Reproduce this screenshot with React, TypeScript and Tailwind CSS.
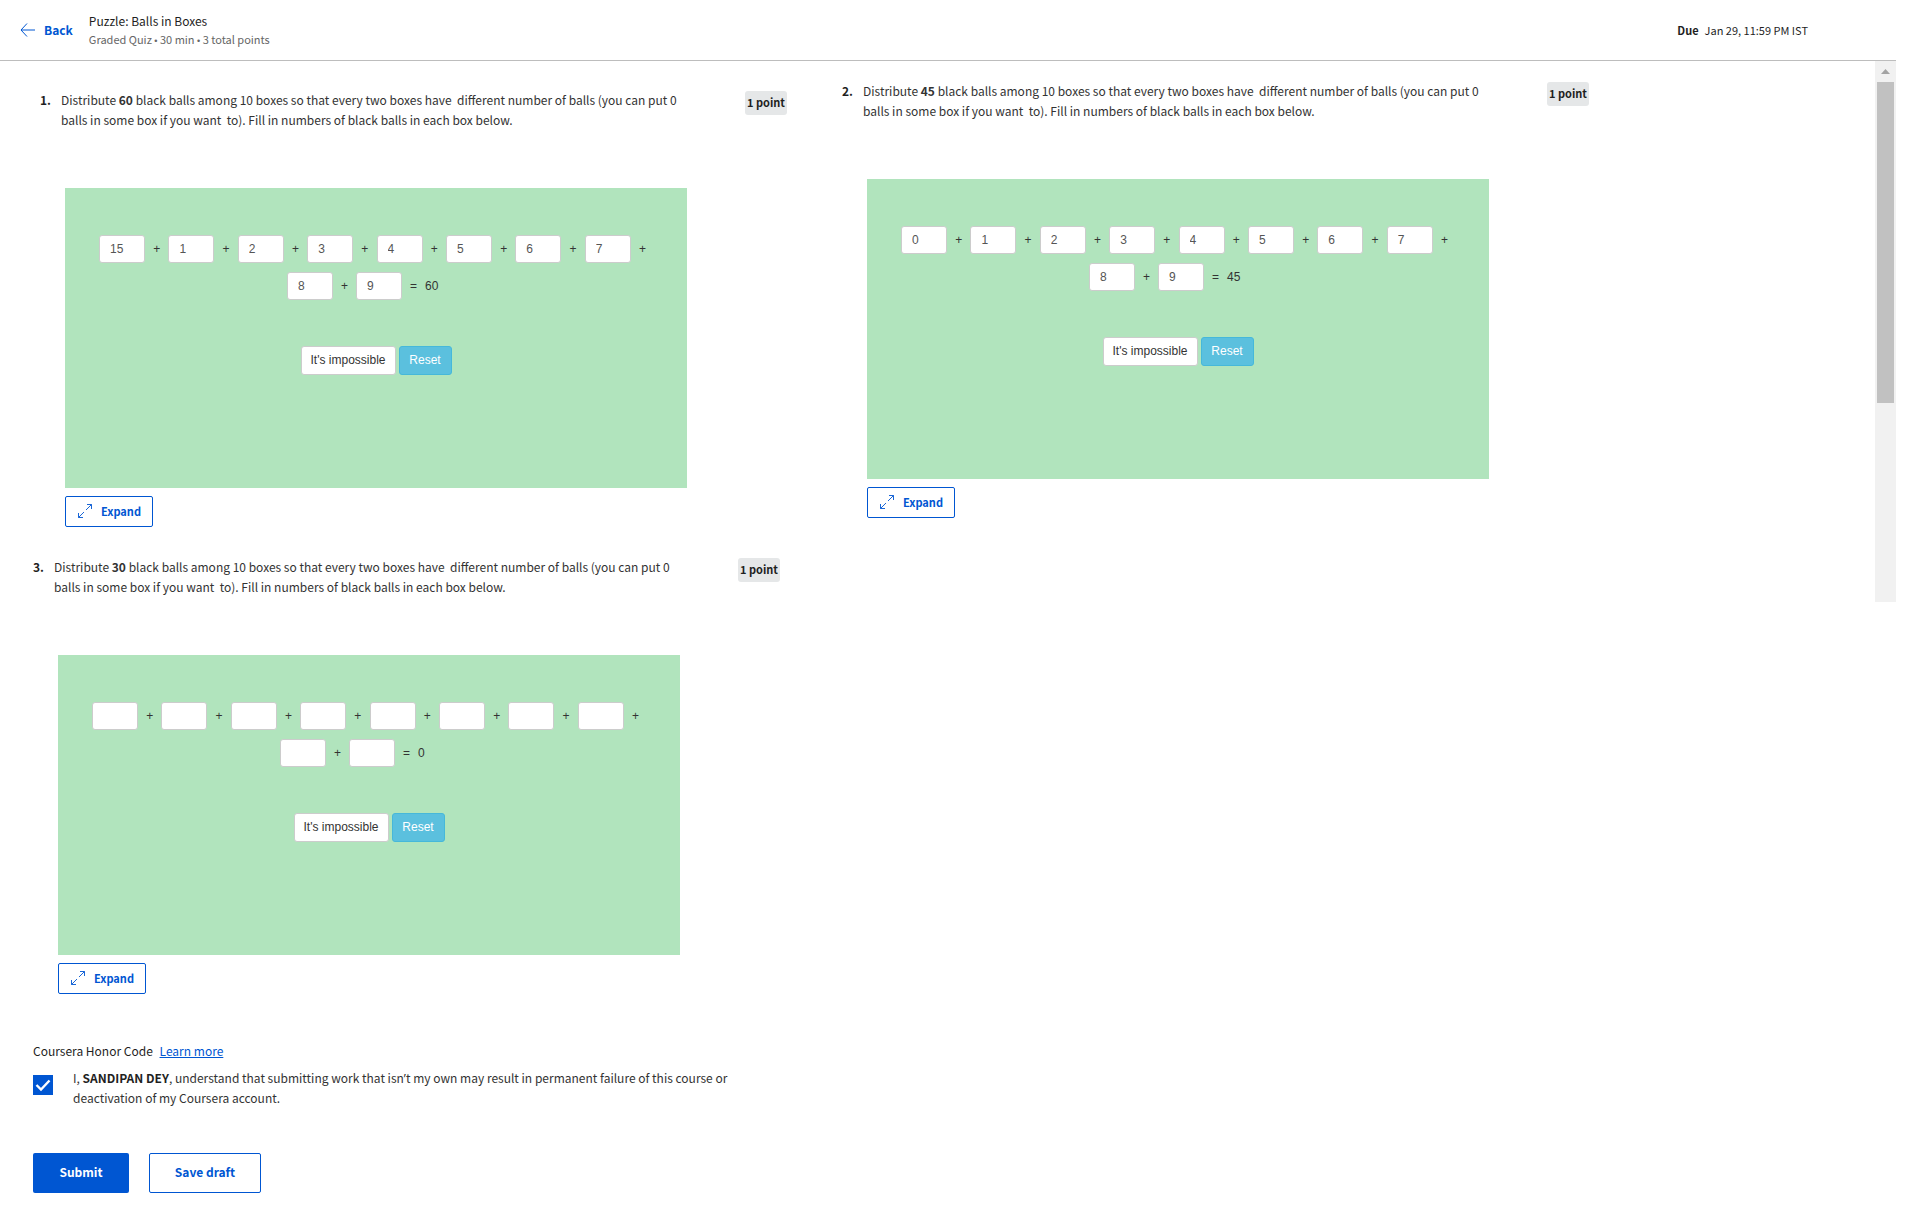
import React from "react";

type Question = {
  id: number;
  total: number;
  values: string[];
  sum: number;
};

const questions: Question[] = [
  { id: 1, total: 60, values: ["15", "1", "2", "3", "4", "5", "6", "7", "8", "9"], sum: 60 },
  { id: 2, total: 45, values: ["0", "1", "2", "3", "4", "5", "6", "7", "8", "9"], sum: 45 },
  { id: 3, total: 30, values: ["", "", "", "", "", "", "", "", "", ""], sum: 0 },
];

function ExpandIcon() {
  return (
    <svg width="16" height="16" viewBox="0 0 16 16" fill="none" stroke="#0056d2" strokeWidth="0.9" aria-hidden="true">
      <path d="M10 1.500h4.500v4.500M14.500 1.500L9 7M7 9L1.500 14.500M1.500 10v4.500h4.500" />
    </svg>
  );
}

function BallInput({ value, label }: { value: string; label: string }) {
  return (
    <input
      type="text"
      aria-label={label}
      defaultValue={value}
      className="h-7 w-[46px] shrink-0 rounded-[3px] border border-[#ccc] bg-white px-2.5 text-xs text-[#555] outline-none"
    />
  );
}

function Terms({ values, start }: { values: string[]; start: number }) {
  return (
    <>
      {values.map((value, i) => (
        <React.Fragment key={start + i}>
          <BallInput value={value} label={`Box ${start + i + 1}`} />
          {start + i < 9 && <span>+</span>}
        </React.Fragment>
      ))}
    </>
  );
}

function Puzzle({ question }: { question: Question }) {
  return (
    <form
      onSubmit={(e) => e.preventDefault()}
      className="h-[300px] w-[622px] bg-[#b1e4bd] pt-[47px] font-['Liberation_Sans',sans-serif] text-xs text-[#333]"
    >
      <div className="flex items-center justify-between pr-[41px] pl-[34px]">
        <Terms values={question.values.slice(0, 8)} start={0} />
      </div>
      <div className="mt-[9px] flex items-center gap-2 pl-[222px]">
        <Terms values={question.values.slice(8)} start={8} />
        <span>=</span>
        <output>{question.sum}</output>
      </div>
      <div className="mt-[46px] flex justify-center gap-[3px]">
        <button type="button" className="h-[29px] w-[95px] rounded-[3px] border border-[#ccc] bg-white pb-0.5 text-[#333]">
          It's impossible
        </button>
        <button type="reset" className="h-[29px] w-[53px] rounded-[3px] border border-[#46b8da] bg-[#5bc0de] pb-0.5 text-white">
          Reset
        </button>
      </div>
    </form>
  );
}

function QuestionCard({ question }: { question: Question }) {
  return (
    <article className="w-[747px] shrink-0">
      <div className="flex items-start">
        <span className="w-[21px] shrink-0 font-bold">{question.id}.</span>
        <p className="w-[620px] text-[#333]">
          Distribute <b>{question.total}</b> black balls among 10 boxes so that every two boxes have&nbsp; different
          number of balls (you can put 0 balls in some box if you want&nbsp; to). Fill in numbers of black balls in each
          box below.
        </p>
        <span className="mt-px ml-auto flex h-6 w-[42px] shrink-0 items-center justify-center rounded-[3px] bg-[#e5e7e8] pb-0.5 text-[11px] font-bold whitespace-nowrap">
          1 point
        </span>
      </div>
      <div className="mt-[58px] ml-[25px]">
        <Puzzle question={question} />
        <button
          type="button"
          className="mt-2 flex h-[31px] w-[88px] items-center justify-center gap-2 rounded-[2px] border border-[#0056d2] bg-white pb-0.5 text-[11px] font-bold text-[#0056d2]"
        >
          <ExpandIcon />
          Expand
        </button>
      </div>
    </article>
  );
}

export default function App() {
  return (
    <div className="min-h-screen bg-white pr-6 font-['Noto_Sans_CJK_SC','Source_Sans_Pro',sans-serif] text-[12px] leading-5 text-[#1f1f1f]">
      <header className="flex h-[61px] items-center border-b border-[#bdbdbd] pr-[88px] pl-5">
        <a href="#back" className="flex items-center gap-2 font-bold text-[#0056d2]">
          <svg width="16" height="16" viewBox="0 0 16 16" fill="none" stroke="#0056d2" aria-hidden="true">
            <path d="M7 1.5L1 8l6 6.5M1 8h14" />
          </svg>
          Back
        </a>
        <div className="ml-4 leading-[18px]">
          <h1>Puzzle: Balls in Boxes</h1>
          <p className="text-[11px] leading-[18px] text-[#666]">
            Graded Quiz <span className="font-['Liberation_Sans',sans-serif] text-[9px] leading-none">•</span> 30 min{" "}
            <span className="font-['Liberation_Sans',sans-serif] text-[9px] leading-none">•</span> 3 total points
          </p>
        </div>
        <p className="ml-auto flex gap-1.5 text-[11px]">
          <b>Due</b>
          <time>Jan 29, 11:59 PM IST</time>
        </p>
      </header>

      <div className="flex items-start">
        <main className="min-w-0 grow">
          <div className="flex gap-[55px] pl-10">
            <div className="pt-[29px]">
              <QuestionCard question={questions[0]} />
            </div>
            <div className="pt-5">
              <QuestionCard question={questions[1]} />
            </div>
          </div>

          <div className="mt-[30px] pl-[33px]">
            <QuestionCard question={questions[2]} />

            <section className="mt-[47px]">
              <p>
                Coursera Honor Code{" "}
                <a href="#honor" className="ml-1 text-[#0056d2] underline">
                  Learn more
                </a>
              </p>
              <div className="mt-[7px] flex items-start gap-5">
                <span className="relative mt-[7px] size-5 shrink-0">
                  <input
                    id="honor-code"
                    type="checkbox"
                    defaultChecked
                    className="block size-5 appearance-none bg-white checked:bg-[#0056d2]"
                  />
                  <svg
                    className="pointer-events-none absolute inset-0"
                    width="20"
                    height="20"
                    viewBox="0 0 20 20"
                    fill="none"
                    stroke="white"
                    strokeWidth="2.4"
                    aria-hidden="true"
                  >
                    <path d="M3.500 10l4.500 4.500L16.500 5.500" />
                  </svg>
                </span>
                <label htmlFor="honor-code" className="w-[660px] text-[#333]">
                  I, <b className="text-[#1f1f1f]">SANDIPAN DEY</b>, understand that submitting work that isn
                  <span className="font-['Noto_Sans',sans-serif] leading-none">’</span>t my own may result in permanent
                  failure of this course or deactivation of my Coursera account.
                </label>
              </div>
              <div className="mt-[45px] flex gap-5 font-bold">
                <button type="button" className="h-10 w-24 rounded-[2px] bg-[#0056d2] pb-0.5 text-white">
                  Submit
                </button>
                <button
                  type="button"
                  className="h-10 w-28 rounded-[2px] border border-[#0056d2] bg-white pb-0.5 text-[#0056d2]"
                >
                  Save draft
                </button>
              </div>
            </section>
          </div>
        </main>

        <div className="h-[541px] w-[21px] shrink-0 bg-[#f1f1f1]" aria-hidden="true">
          <div className="flex h-[21px] items-center justify-center">
            <svg width="9" height="5" viewBox="0 0 9 5" fill="#a3a3a3">
              <path d="M0 5L4.500 0L9 5z" />
            </svg>
          </div>
          <div className="mx-0.5 h-[321px] bg-[#c1c1c1]" />
        </div>
      </div>
    </div>
  );
}
